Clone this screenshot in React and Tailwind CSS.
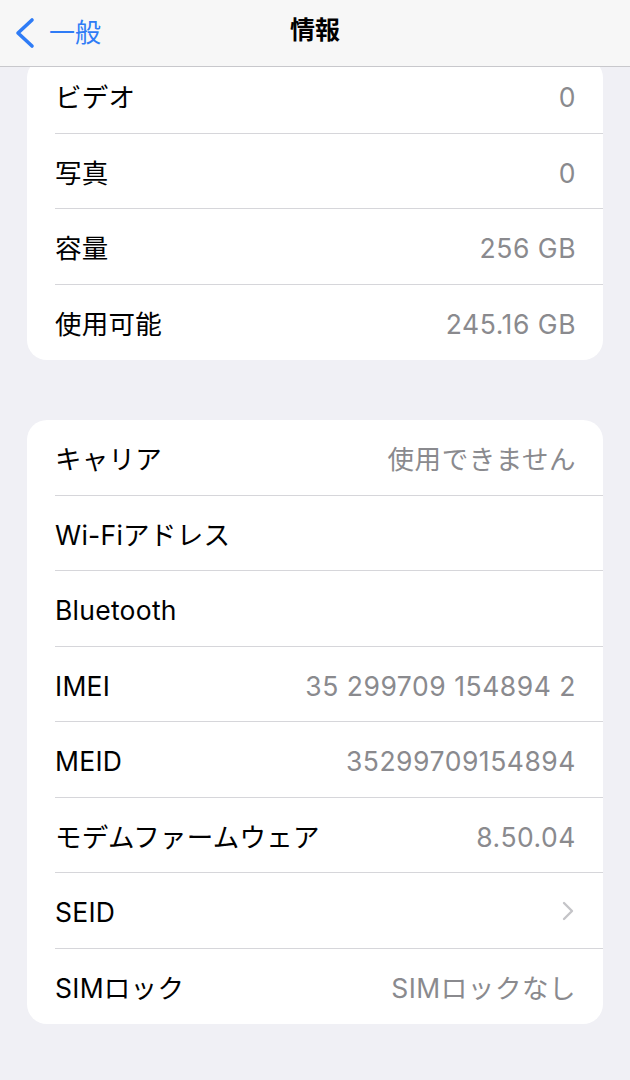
const group1 = [
  { label: "ビデオ", value: "0" },
  { label: "写真", value: "0" },
  { label: "容量", value: "256 GB" },
  { label: "使用可能", value: "245.16 GB" },
];

const group2 = [
  { label: "キャリア", value: "使用できません" },
  { label: "Wi-Fiアドレス", value: "" },
  { label: "Bluetooth", value: "" },
  { label: "IMEI", value: "35 299709 154894 2" },
  { label: "MEID", value: "35299709154894" },
  { label: "モデムファームウェア", value: "8.50.04" },
  { label: "SEID", chevron: true },
  { label: "SIMロック", value: "SIMロックなし" },
];

function Row({ label, value, chevron, last }) {
  return (
    <div className="pl-[28px]">
      <div
        className={`h-[75.5px] pt-[6px] flex items-center justify-between pr-[27px] ${
          last ? "" : "border-b border-[#d6d6da]"
        }`}
      >
        <span className="text-[26.5px] tracking-[0.01em] text-black">{label}</span>
        {chevron ? (
          <svg width="14" height="22" viewBox="0 0 14 22" className="mr-[1px] -mt-[4px]">
            <path
              d="M3 3 L11 11 L3 19"
              fill="none"
              stroke="#c4c4c8"
              strokeWidth="2.4"
              strokeLinecap="round"
              strokeLinejoin="round"
            />
          </svg>
        ) : (
          <span className="text-[26.5px] tracking-[0.02em] text-[#8a8a8e]">{value}</span>
        )}
      </div>
    </div>
  );
}

function Card({ rows, className }) {
  return (
    <div className={`bg-white rounded-[20px] mx-[27px] ${className}`}>
      {rows.map((r, i) => (
        <Row key={r.label} {...r} last={i === rows.length - 1} />
      ))}
    </div>
  );
}

export default function App() {
  return (
    <div
      className="relative w-[630px] h-[1080px] overflow-hidden bg-[#f0f0f5]"
      style={{ fontFamily: 'Inter, "Noto Sans CJK JP", sans-serif' }}
    >
      {/* nav bar over the scrolled list */}
      <div className="absolute top-0 left-0 right-0 h-[67px] bg-[#f7f7f7] border-b border-[#c8c8cc] z-10 flex items-center">
        <div className="flex items-center pl-[14px] gap-[13px]">
          <svg width="22" height="32" viewBox="0 0 22 32">
            <path
              d="M18 3 L4 16 L18 29"
              fill="none"
              stroke="#2f7cf6"
              strokeWidth="3.6"
              strokeLinecap="round"
              strokeLinejoin="round"
            />
          </svg>
          <span className="text-[26px] text-[#2f7cf6] -mt-[1px]">一般</span>
        </div>
        <span className="absolute left-1/2 -translate-x-1/2 text-[25px] font-bold text-black -mt-[4px]">
          情報
        </span>
      </div>

      <div className="pt-[58px]">
        <Card rows={group1} />
        <Card rows={group2} className="mt-[60px]" />
      </div>
    </div>
  );
}
